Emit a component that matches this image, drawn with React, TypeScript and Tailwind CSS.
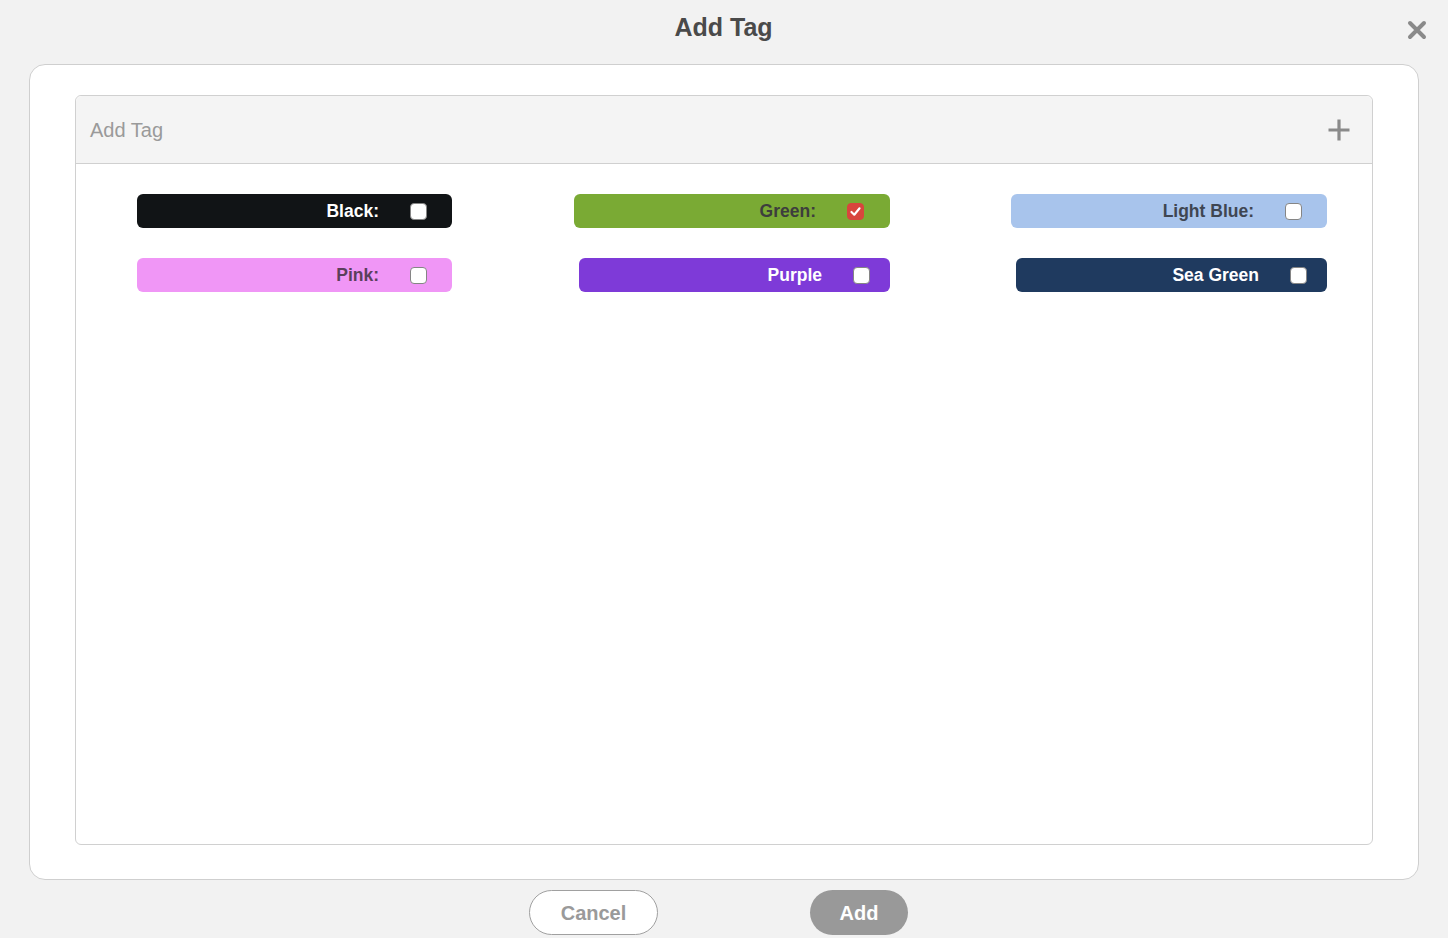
import React, { useState } from 'react';

type Tag = {
    id: number;
    label: string;
    bg: string;
    text: string;
    width: string;
    pr: string;
    self: string;
};

const tags: Tag[] = [
    { id: 1, label: 'Black:', bg: 'bg-[#111416]', text: 'text-white', width: 'w-[315px]', pr: 'pr-[25px]', self: 'justify-self-start' },
    { id: 2, label: 'Green:', bg: 'bg-[#7aaa34]', text: 'text-[#3d3d3d]', width: 'w-[316px]', pr: 'pr-[26px]', self: 'justify-self-end' },
    { id: 3, label: 'Light Blue:', bg: 'bg-[#a8c4ec]', text: 'text-[#3f4652]', width: 'w-[316px]', pr: 'pr-[25px]', self: 'justify-self-end' },
    { id: 4, label: 'Pink:', bg: 'bg-[#f096f6]', text: 'text-[#5b3f5c]', width: 'w-[315px]', pr: 'pr-[25px]', self: 'justify-self-start' },
    { id: 5, label: 'Purple', bg: 'bg-[#7e3ad8]', text: 'text-white', width: 'w-[311px]', pr: 'pr-[20px]', self: 'justify-self-end' },
    { id: 6, label: 'Sea Green', bg: 'bg-[#1f3a5f]', text: 'text-white', width: 'w-[311px]', pr: 'pr-[20px]', self: 'justify-self-end' },
];

const Checkbox: React.FC<{ checked: boolean; onChange: () => void }> = ({ checked, onChange }) => (
    <button
        onClick={onChange}
        className={`w-[17px] h-[17px] rounded-[4px] flex items-center justify-center ${checked ? 'bg-[#d8453d] border border-[#d8453d]' : 'bg-white border-[1.5px] border-[#858585]'}`}
    >
        {checked && (
            <svg width="13" height="13" viewBox="0 0 16 16">
                <path d="M3 8.5 L6.5 12 L13 4" fill="none" stroke="white" strokeWidth="2.6" strokeLinecap="round" strokeLinejoin="round" />
            </svg>
        )}
    </button>
);

const App: React.FC = () => {
    const [checked, setChecked] = useState<number[]>([2]);

    const toggle = (id: number) =>
        setChecked(prev => (prev.includes(id) ? prev.filter(x => x !== id) : [...prev, id]));

    return (
        <div className="w-[1448px] h-[938px] bg-[#f2f2f2] font-['Liberation_Sans',Arial,sans-serif] flex flex-col overflow-hidden">
            {/* Title bar */}
            <div className="relative h-[64px] flex justify-center">
                <h1 className="pt-[9px] text-[25px] leading-[36px] font-bold text-[#4a4a4a] pr-[1px]">Add Tag</h1>
                <button className="absolute right-[21px] top-[20px] text-[#8a8a8a]" title="Close">
                    <svg width="20" height="20" viewBox="0 0 20 20">
                        <path d="M3 3 L17 17 M17 3 L3 17" stroke="currentColor" strokeWidth="4" strokeLinecap="round" />
                    </svg>
                </button>
            </div>

            {/* Card */}
            <div className="mx-[29px] h-[816px] bg-white border border-[#cfcfcf] rounded-[16px] pt-[30px] px-[45px]">
                <div className="h-[750px] border border-[#d0d0d0] rounded-[6px] flex flex-col">
                    {/* Header */}
                    <div className="h-[68px] bg-[#f4f4f4] border-b border-[#d0d0d0] rounded-t-[6px] flex items-center justify-between pl-[14px] pr-[21px]">
                        <span className="text-[20px] text-[#9a9a9a]">Add Tag</span>
                        <button className="text-[#8a8a8a]" title="Add">
                            <svg width="24" height="24" viewBox="0 0 24 24">
                                <path d="M12 1.5 V22.5 M1.5 12 H22.5" stroke="currentColor" strokeWidth="3.2" />
                            </svg>
                        </button>
                    </div>

                    {/* Tags */}
                    <div className="pt-[30px] pl-[61px] grid grid-cols-[316px_316px_316px] gap-x-[121px] gap-y-[30px]">
                        {tags.map(tag => (
                            <div
                                key={tag.id}
                                className={`${tag.width} ${tag.self} h-[34px] rounded-[6px] ${tag.bg} ${tag.pr} flex items-center justify-end gap-[31px]`}
                            >
                                <span className={`text-[17.5px] font-bold ${tag.text}`}>{tag.label}</span>
                                <Checkbox checked={checked.includes(tag.id)} onChange={() => toggle(tag.id)} />
                            </div>
                        ))}
                    </div>
                </div>
            </div>

            {/* Footer buttons */}
            <div className="flex justify-center gap-[152px] pt-[10px] pr-[11px]">
                <button className="w-[129px] h-[45px] rounded-full bg-white border border-[#a0a0a0] text-[20px] font-bold text-[#9a9a9a]">Cancel</button>
                <button className="w-[98px] h-[45px] rounded-full bg-[#999999] text-[20px] font-bold text-white">Add</button>
            </div>
        </div>
    );
};

export default App;
